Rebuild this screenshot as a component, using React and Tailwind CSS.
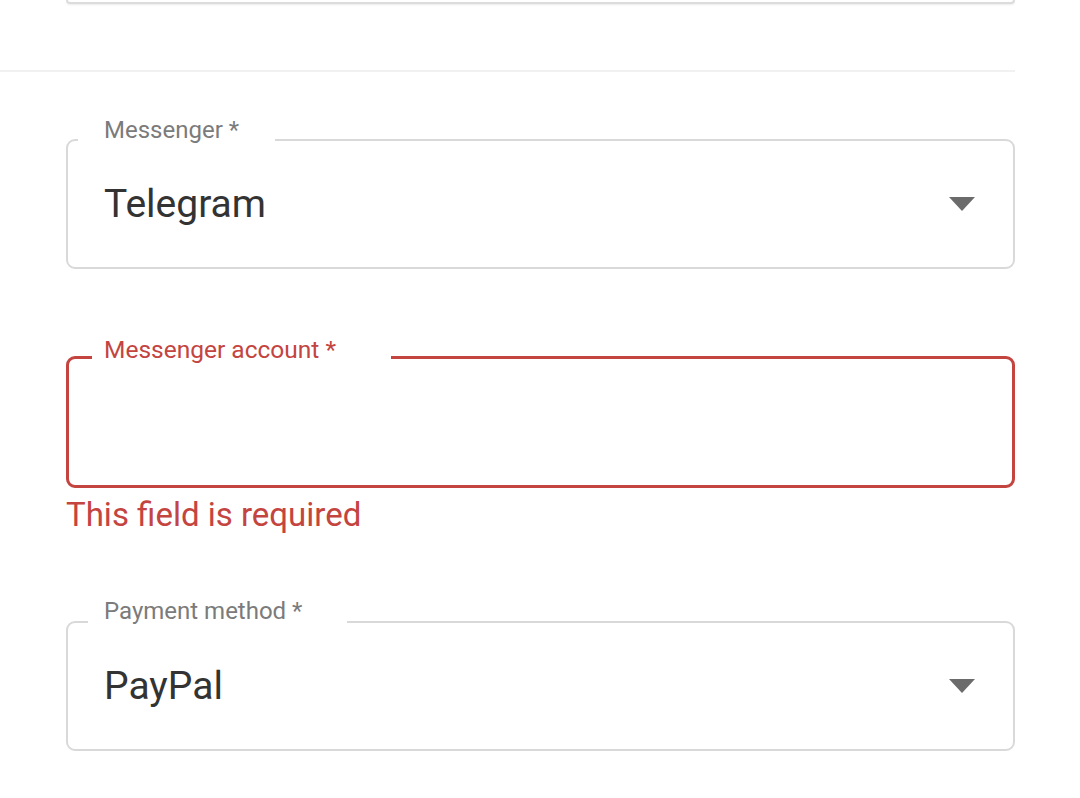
import React from 'react';

const font = { fontFamily: 'Roboto, "Liberation Sans", sans-serif' };

function Caret() {
  return (
    <svg width="26" height="14" viewBox="0 0 26 14" className="shrink-0">
      <path d="M0 0 L26 0 L13 14 Z" fill="#6b6b6b" />
    </svg>
  );
}

function SelectField({ label, value, notchClass }) {
  return (
    <div className="relative h-[130px] rounded-[9px] border-2 border-[#d9d9d9] flex items-center pl-[36px] pr-[38px]">
      <span className={`absolute top-[-31px] bg-white text-[24px] leading-[40px] text-[#7b7b7b] ${notchClass}`}>
        {label}
      </span>
      <span className="flex-1 text-[39px] text-[#333333]">{value}</span>
      <Caret />
    </div>
  );
}

export default function App() {
  return (
    <div className="w-[1080px] h-[798px] bg-white overflow-hidden" style={font}>
      <div className="w-[1015px]">
        <div className="ml-[66px] h-[4px] border-x-2 border-b-2 border-[#dcdcdc] rounded-b-[8px] shadow-[0_1px_2px_rgba(0,0,0,0.08)]" />
        <div className="mt-[66px] h-[2px] bg-[#f1f1f1]" />

        <div className="ml-[66px] mt-[67px]">
          <SelectField label="Messenger *" value="Telegram" notchClass="left-[10px] pl-[26px] pr-[36px]" />

          <div className="relative mt-[87px] h-[132px] rounded-[9px] border-[3px] border-[#c4443f]">
            <span className="absolute top-[-29px] left-[23px] bg-white pl-[12px] pr-[55px] text-[24.5px] leading-[40px] text-[#c4443f]">
              Messenger account *
            </span>
          </div>
          <div className="mt-[7px] text-[33px] leading-[40px] text-[#c4443f]">This field is required</div>

          <div className="mt-[86px]">
            <SelectField label="Payment method *" value="PayPal" notchClass="left-[20px] pl-[16px] pr-[45px] top-[-32px]" />
          </div>
        </div>
      </div>
    </div>
  );
}
